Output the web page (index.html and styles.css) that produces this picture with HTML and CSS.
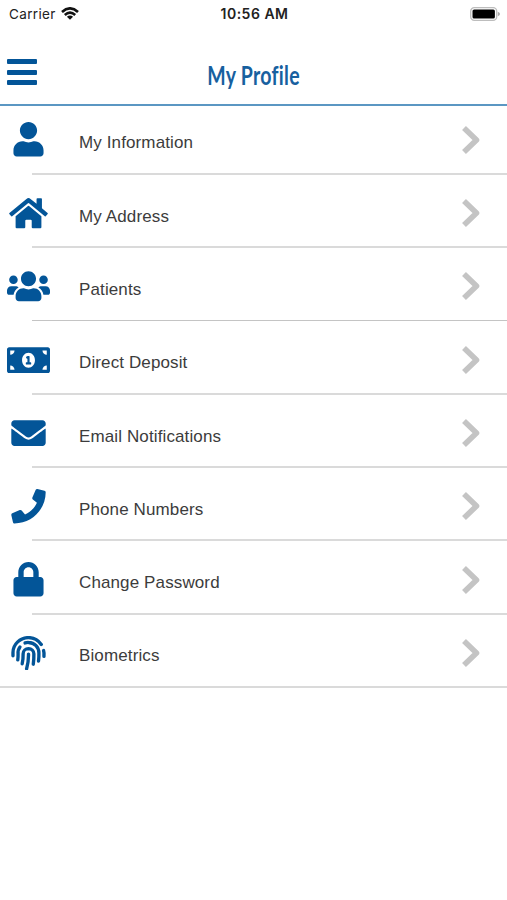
FILE: index.html
```html
<!DOCTYPE html>
<html lang="en">
<head>
<meta charset="utf-8">
<title>My Profile</title>
<link rel="stylesheet" href="styles.css">
</head>
<body>
<div class="status">
  <div class="carrier"><span class="carrier-name">Carrier</span>
    <svg class="wifi" viewBox="0 0 18 13"><g fill="none" stroke="#111" stroke-width="2.6"><path d="M1 5Q9-2.3 17 5"/><path d="M3.8 8Q9 3.400 14.200 8"/></g><path d="M9 12.800L5.900 9.800Q9 7.400 12.100 9.800Z" fill="#111"/></svg>
  </div>
  <div class="time">10:56 AM</div>
  <svg class="battery" viewBox="0 0 30 14"><rect x=".7" y=".7" width="26" height="12.600" rx="3.600" fill="#fff" stroke="#bdbdbd" stroke-width="1.300"/><rect x="2.500" y="2.500" width="22.400" height="9" rx="1.600" fill="#000"/><path d="M27.800 4.800Q30 5.600 30 7T27.800 9.200Z" fill="#aaa"/></svg>
</div>
<header class="header">
  <div class="menu"><i></i><i></i><i></i></div>
  <h1 class="title">My Profile</h1>
</header>
<ul class="list">
  <li class="row"><svg class="icon" viewBox="-96 0 640 512"><path d="M224 256c70.7 0 128-57.3 128-128S294.7 0 224 0 96 57.3 96 128s57.3 128 128 128zm89.6 32h-16.7c-22.2 10.2-46.9 16-72.9 16s-50.6-5.8-72.9-16h-16.7C60.2 288 0 348.2 0 422.4V464c0 26.5 21.5 48 48 48h352c26.5 0 48-21.5 48-48v-41.6c0-74.2-60.2-134.4-134.4-134.4z"/></svg><span class="label">My Information</span><svg class="chev" viewBox="0 0 20 30"><path d="M3 3L15.500 15L3 27"/></svg></li>
  <li class="row"><svg class="icon" viewBox="-32 0 640 512"><path d="M280.37 148.26L96 300.11V464a16 16 0 0 0 16 16l112.06-.29a16 16 0 0 0 15.92-16V368a16 16 0 0 1 16-16h64a16 16 0 0 1 16 16v95.64a16 16 0 0 0 16 16.05L464 480a16 16 0 0 0 16-16V300L295.67 148.26a12.19 12.19 0 0 0-15.3 0zM571.6 251.47L488 182.56V44.05a12 12 0 0 0-12-12h-56a12 12 0 0 0-12 12v72.61L318.47 43a48 48 0 0 0-61 0L4.34 251.47a12 12 0 0 0-1.6 16.9l25.5 31A12 12 0 0 0 45.15 301l235.22-193.74a12.19 12.19 0 0 1 15.3 0L530.9 301a12 12 0 0 0 16.9-1.6l25.5-31a12 12 0 0 0-1.7-16.93z"/></svg><span class="label">My Address</span><svg class="chev" viewBox="0 0 20 30"><path d="M3 3L15.500 15L3 27"/></svg></li>
  <li class="row thin"><svg class="icon" viewBox="0 0 640 512"><path d="M96 224c35.3 0 64-28.7 64-64s-28.7-64-64-64-64 28.7-64 64 28.7 64 64 64zm448 0c35.3 0 64-28.7 64-64s-28.7-64-64-64-64 28.7-64 64 28.7 64 64 64zm32 32h-64c-17.6 0-33.5 7.1-45.1 18.6 40.3 22.1 68.9 62 75.1 109.4h66c17.7 0 32-14.3 32-32v-32c0-35.3-28.7-64-64-64zm-256 0c61.9 0 112-50.1 112-112S381.9 32 320 32 208 82.1 208 144s50.1 112 112 112zm76.8 32h-8.3c-20.8 10-43.9 16-68.5 16s-47.6-6-68.5-16h-8.3C179.6 288 128 339.6 128 403.2V432c0 26.5 21.5 48 48 48h288c26.5 0 48-21.5 48-48v-28.8c0-63.6-51.6-115.2-115.2-115.2zm-223.7-13.4C161.5 263.1 145.6 256 128 256H64c-35.3 0-64 28.7-64 64v32c0 17.7 14.3 32 32 32h65.9c6.3-47.4 34.9-87.3 75.2-109.4z"/></svg><span class="label">Patients</span><svg class="chev" viewBox="0 0 20 30"><path d="M3 3L15.500 15L3 27"/></svg></li>
  <li class="row"><svg class="icon" viewBox="0 0 640 512"><path d="M352 288h-16v-88c0-4.42-3.58-8-8-8h-13.58c-4.74 0-9.37 1.4-13.31 4.03l-15.33 10.22a7.994 7.994 0 0 0-2.22 11.09l8.88 13.31a7.994 7.994 0 0 0 11.09 2.22l.47-.31V288h-16c-4.42 0-8 3.58-8 8v16c0 4.42 3.58 8 8 8h64c4.42 0 8-3.58 8-8v-16c0-4.42-3.58-8-8-8zM608 64H32C14.33 64 0 78.33 0 96v320c0 17.67 14.33 32 32 32h576c17.67 0 32-14.33 32-32V96c0-17.67-14.33-32-32-32zM48 400v-64c35.35 0 64 28.65 64 64H48zm0-224v-64h64c0 35.35-28.65 64-64 64zm272 192c-53.02 0-96-50.15-96-112 0-61.86 42.98-112 96-112s96 50.13 96 112c0 61.87-43 112-96 112zm272 32h-64c0-35.35 28.65-64 64-64v64zm0-224c-35.35 0-64-28.65-64-64h64v64z"/></svg><span class="label">Direct Deposit</span><svg class="chev" viewBox="0 0 20 30"><path d="M3 3L15.500 15L3 27"/></svg></li>
  <li class="row"><svg class="icon" viewBox="-64 0 640 512"><path d="M502.3 190.8c3.9-3.1 9.7-.2 9.7 4.7V400c0 26.5-21.5 48-48 48H48c-26.5 0-48-21.5-48-48V195.6c0-5 5.7-7.8 9.7-4.7 22.4 17.4 52.1 39.5 154.1 113.6 21.1 15.4 56.7 47.8 92.2 47.6 35.7.3 72-32.8 92.3-47.6 102-74.1 131.6-96.3 154-113.7zM256 320c23.2.4 56.6-29.2 73.4-41.4 132.7-96.3 142.8-104.7 173.4-128.7 5.8-4.5 9.2-11.5 9.2-18.9v-19c0-26.5-21.5-48-48-48H48c-26.5 0-48 21.5-48 48v19c0 7.4 3.4 14.3 9.2 18.9 30.6 23.9 40.7 32.4 173.4 128.7 16.8 12.2 50.2 41.8 73.4 41.4z"/></svg><span class="label">Email Notifications</span><svg class="chev" viewBox="0 0 20 30"><path d="M3 3L15.500 15L3 27"/></svg></li>
  <li class="row"><svg class="icon" viewBox="-64 0 640 512"><path d="M493.4 24.6l-104-24c-11.3-2.6-22.9 3.3-27.5 13.9l-48 112c-4.2 9.8-1.4 21.3 6.9 28l60.6 49.6c-36 76.7-98.9 140.5-177.2 177.2l-49.6-60.6c-6.8-8.3-18.2-11.1-28-6.9l-112 48C3.9 366.5-2 378.1.6 389.4l24 104C27.1 504.2 36.7 512 48 512c256.1 0 464-207.5 464-464 0-11.2-7.7-20.9-18.6-23.4z"/></svg><span class="label">Phone Numbers</span><svg class="chev" viewBox="0 0 20 30"><path d="M3 3L15.500 15L3 27"/></svg></li>
  <li class="row"><svg class="icon" viewBox="-96 0 640 512"><path d="M400 224h-24v-72C376 68.2 307.8 0 224 0S72 68.2 72 152v72H48c-26.5 0-48 21.5-48 48v192c0 26.5 21.5 48 48 48h352c26.5 0 48-21.5 48-48V272c0-26.5-21.5-48-48-48zm-104 0H152v-72c0-39.7 32.3-72 72-72s72 32.3 72 72v72z"/></svg><span class="label">Change Password</span><svg class="chev" viewBox="0 0 20 30"><path d="M3 3L15.500 15L3 27"/></svg></li>
  <li class="row last"><svg class="icon print" viewBox="-64 0 640 512"><path d="M25 294V246C25 120 135 24 256 24C335 24 400 60 446 126"/><path d="M480 216Q492 256 486 304"/><path d="M129 164Q96 205 101 266Q102 312 96 356"/><path d="M205 103Q230 95 256 96C350 97 410 170 411 254Q413 316 405 374"/><path d="M162 413Q178 339 176 265C176 222 211 188 256 188C301 189 335 224 336 265Q338 344 327 420"/><path d="M256 270Q258 385 228 488"/></svg><span class="label">Biometrics</span><svg class="chev" viewBox="0 0 20 30"><path d="M3 3L15.500 15L3 27"/></svg></li>
</ul>
</body>
</html>
```
FILE: styles.css
```css
* { box-sizing: border-box; }
body { margin: 0; height: 900px; overflow: hidden; background: #fff; font-family: "Liberation Sans", Arial, sans-serif; }
.status { height: 28px; display: grid; grid-template-columns: 1fr auto 1fr; align-items: center; padding: 0 7px 1px 9px; font-family: Inter, sans-serif; color: #222; }
.carrier { display: flex; align-items: center; gap: 5px; font-size: 13.5px; letter-spacing: .35px; }
.wifi { width: 18px; height: 13px; }
.time { font-size: 14px; font-weight: 600; letter-spacing: .5px; }
.battery { width: 30px; height: 14px; justify-self: end; }
.header { height: 78px; border-bottom: 2px solid #5b97c3; display: grid; grid-template-columns: 30px 1fr 30px; padding: 0 7px; align-items: start; }
.menu { display: flex; flex-direction: column; gap: 5.7px; padding-top: 31px; }
.menu i { height: 5px; border-radius: 1px; background: #035598; }
.title { margin: 30px 0 0; text-align: center; font: 700 26.5px/34px Lato, sans-serif; letter-spacing: .4px; color: #17609f; transform: scaleX(.735); white-space: nowrap; }
.list { margin: 0; padding: 0; list-style: none; }
.row { height: 73.3px; display: grid; grid-template-columns: 43px 1fr 20px; column-gap: 29px; align-items: center; padding: 0 26px 6px 7px; background: linear-gradient(#dadada, #dadada) 32px 100% / 100% 2px no-repeat; }
.row > * { margin-top: 9px; }
.row:first-child { height: 69px; }
.row:first-child > * { margin-top: 4px; }
.row.thin { background: linear-gradient(#c4c4c4, #c4c4c4) 32px calc(100% - 1px) / 100% 1px no-repeat; }
.row.last { background-position: 0 100%; }
.icon { width: 43px; height: 34.4px; fill: #035598; }
.print path { fill: none; stroke: #035598; stroke-width: 50; stroke-linecap: round; }
.label { font-size: 17px; line-height: 22px; color: #3c3c3c; padding-top: 7px; letter-spacing: .12px; white-space: nowrap; }
.chev { width: 20px; height: 30px; fill: none; stroke: #c4c4c4; stroke-width: 5.6; stroke-linejoin: round; }
```
